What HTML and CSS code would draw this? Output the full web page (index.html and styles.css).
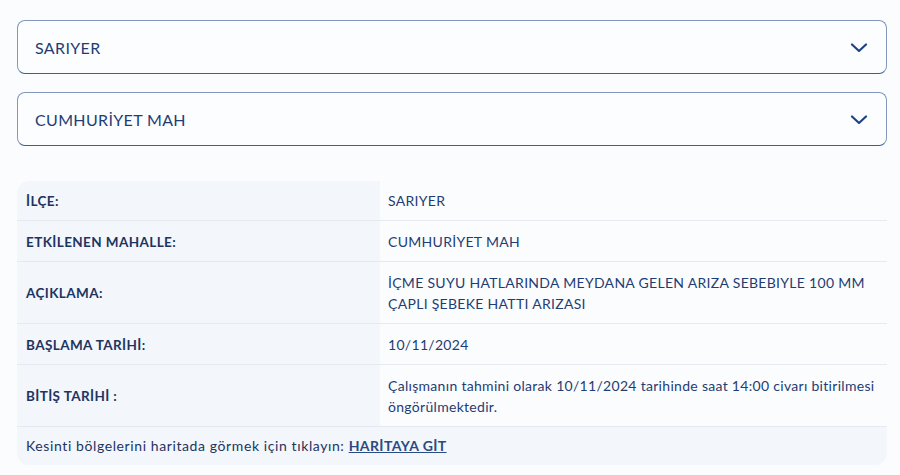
FILE: index.html
```html
<!DOCTYPE html>
<html lang="tr">
<head>
    <meta charset="UTF-8">
    <meta name="viewport" content="width=device-width, initial-scale=1.0">
    <title>Arıza Kesinti Bilgisi</title>
    <link rel="stylesheet" href="styles.css">
</head>
<body>

<div class="page">
    <div class="select-box">
        <span>SARIYER</span>
        <svg class="chevron" width="18" height="10" viewBox="0 0 18 10"><path d="M2 1.5 L9 8 L16 1.5" fill="none" stroke="#1d4384" stroke-width="2.2" stroke-linecap="round" stroke-linejoin="round"/></svg>
    </div>
    <div class="select-box">
        <span>CUMHURİYET MAH</span>
        <svg class="chevron" width="18" height="10" viewBox="0 0 18 10"><path d="M2 1.5 L9 8 L16 1.5" fill="none" stroke="#1d4384" stroke-width="2.2" stroke-linecap="round" stroke-linejoin="round"/></svg>
    </div>

    <div class="info-table">
        <div class="row">
            <div class="label">İLÇE:</div>
            <div class="value">SARIYER</div>
        </div>
        <div class="row">
            <div class="label">ETKİLENEN MAHALLE:</div>
            <div class="value">CUMHURİYET MAH</div>
        </div>
        <div class="row">
            <div class="label">AÇIKLAMA:</div>
            <div class="value">İÇME SUYU HATLARINDA MEYDANA GELEN ARIZA SEBEBIYLE 100 MM ÇAPLI ŞEBEKE HATTI ARIZASI</div>
        </div>
        <div class="row">
            <div class="label">BAŞLAMA TARİHİ:</div>
            <div class="value">10/11/2024</div>
        </div>
        <div class="row">
            <div class="label">BİTİŞ TARİHİ :</div>
            <div class="value">Çalışmanın tahmini olarak 10/11/2024 tarihinde saat 14:00 civarı bitirilmesi öngörülmektedir.</div>
        </div>
        <div class="footer">
            Kesinti bölgelerini haritada görmek için tıklayın: <a href="#">HARİTAYA GİT</a>
        </div>
    </div>
</div>

</body>
</html>
```

FILE: styles.css
```css
body {
    font-family: 'Lato', 'Noto Sans', sans-serif;
    background-color: #fbfcfe;
    color: #1d3461;
    margin: 0;
}
.page {
    padding: 20px 13px 0 17px;
    display: flex;
    flex-direction: column;
}
.select-box {
    height: 52px;
    border: 1px solid #8397bd;
    border-bottom-color: #3b5e9c;
    border-radius: 8px;
    display: flex;
    align-items: center;
    justify-content: space-between;
    padding: 0 18px 0 17px;
    margin-bottom: 18px;
    font-size: 16px;
    letter-spacing: 0.35px;
    color: #1f3d73;
    background-color: #fcfdff;
}
.select-box .chevron {
    margin-top: 2px;
}
.info-table {
    margin-top: 17px;
    border-radius: 12px;
    overflow: hidden;
    background-color: #f3f6fb;
}
.row {
    display: grid;
    grid-template-columns: 363px 1fr;
    border-bottom: 1px solid #e6eaf0;
    font-size: 14px;
}
.label {
    padding: 10px 9px 9px;
    font-weight: 700;
    font-size: 13.5px;
    letter-spacing: 0.4px;
    display: flex;
    align-items: center;
    color: #1d3461;
}
.value {
    background-color: #fbfcfe;
    padding: 10px 8px 9px;
    line-height: 21px;
    letter-spacing: 0.3px;
    color: #1f3d73;
}
.row:first-child .value {
    padding-top: 9px;
}
.footer {
    padding: 11px 9px 11px;
    font-size: 14px;
    letter-spacing: 0.6px;
    color: #1d3461;
    line-height: 16px;
}
.footer a {
    color: #2a4a82;
    font-weight: 700;
    letter-spacing: 0.4px;
    text-decoration: underline;
}
```
